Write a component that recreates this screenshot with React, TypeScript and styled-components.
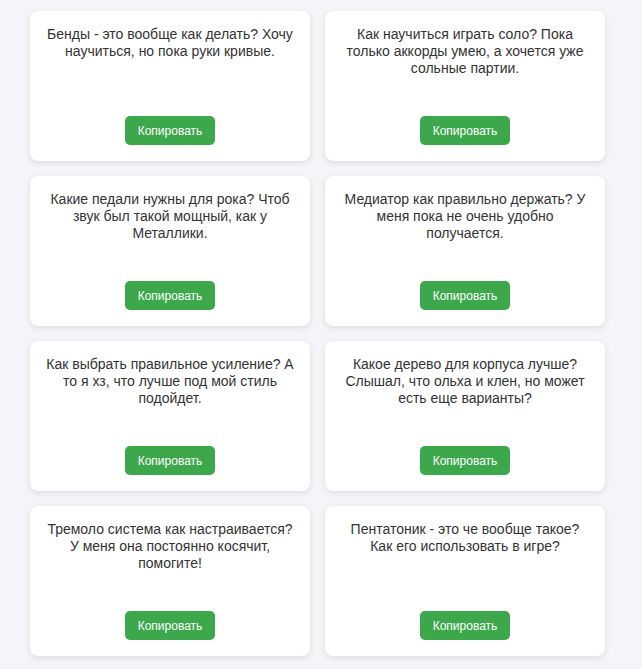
import React from 'react';
import styled, { createGlobalStyle } from 'styled-components';

const GlobalStyle = createGlobalStyle`
  body {
    margin: 0;
    background-color: #f4f4f9;
    font-family: 'Liberation Sans', Arial, sans-serif;
  }
`;

const Grid = styled.div`
  display: grid;
  grid-template-columns: 280px 280px;
  gap: 15px;
  padding: 11px 0 13px 30px;
`;

const Card = styled.div`
  box-sizing: border-box;
  height: 150px;
  background-color: #fff;
  border-radius: 8px;
  box-shadow: 0 2px 6px rgba(0, 0, 0, 0.1);
  padding: 15px 15px 16px;
  display: flex;
  flex-direction: column;
  justify-content: space-between;
  align-items: center;
`;

const Question = styled.p`
  margin: 0;
  font-size: 14px;
  line-height: 17px;
  color: #333;
  text-align: center;
`;

const CopyButton = styled.button`
  background-color: #3ca84b;
  color: #fff;
  border: none;
  border-radius: 5px;
  padding: 0 13px;
  height: 29px;
  font-family: 'Liberation Sans', Arial, sans-serif;
  font-size: 12px;
  cursor: pointer;

  &:hover {
    background-color: #34953f;
  }
`;

const questions = [
  'Бенды - это вообще как делать? Хочу научиться, но пока руки кривые.',
  'Как научиться играть соло? Пока только аккорды умею, а хочется уже сольные партии.',
  'Какие педали нужны для рока? Чтоб звук был такой мощный, как у Металлики.',
  'Медиатор как правильно держать? У меня пока не очень удобно получается.',
  'Как выбрать правильное усиление? А то я хз, что лучше под мой стиль подойдет.',
  'Какое дерево для корпуса лучше? Слышал, что ольха и клен, но может есть еще варианты?',
  'Тремоло система как настраивается? У меня она постоянно косячит, помогите!',
  'Пентатоник - это че вообще такое? Как его использовать в игре?',
];

const App: React.FC = () => {
  const handleCopy = (text: string) => {
    navigator.clipboard?.writeText(text).catch(() => {});
  };

  return (
    <>
      <GlobalStyle />
      <Grid>
        {questions.map(q => (
          <Card key={q}>
            <Question>{q}</Question>
            <CopyButton onClick={() => handleCopy(q)}>Копировать</CopyButton>
          </Card>
        ))}
      </Grid>
    </>
  );
};

export default App;
